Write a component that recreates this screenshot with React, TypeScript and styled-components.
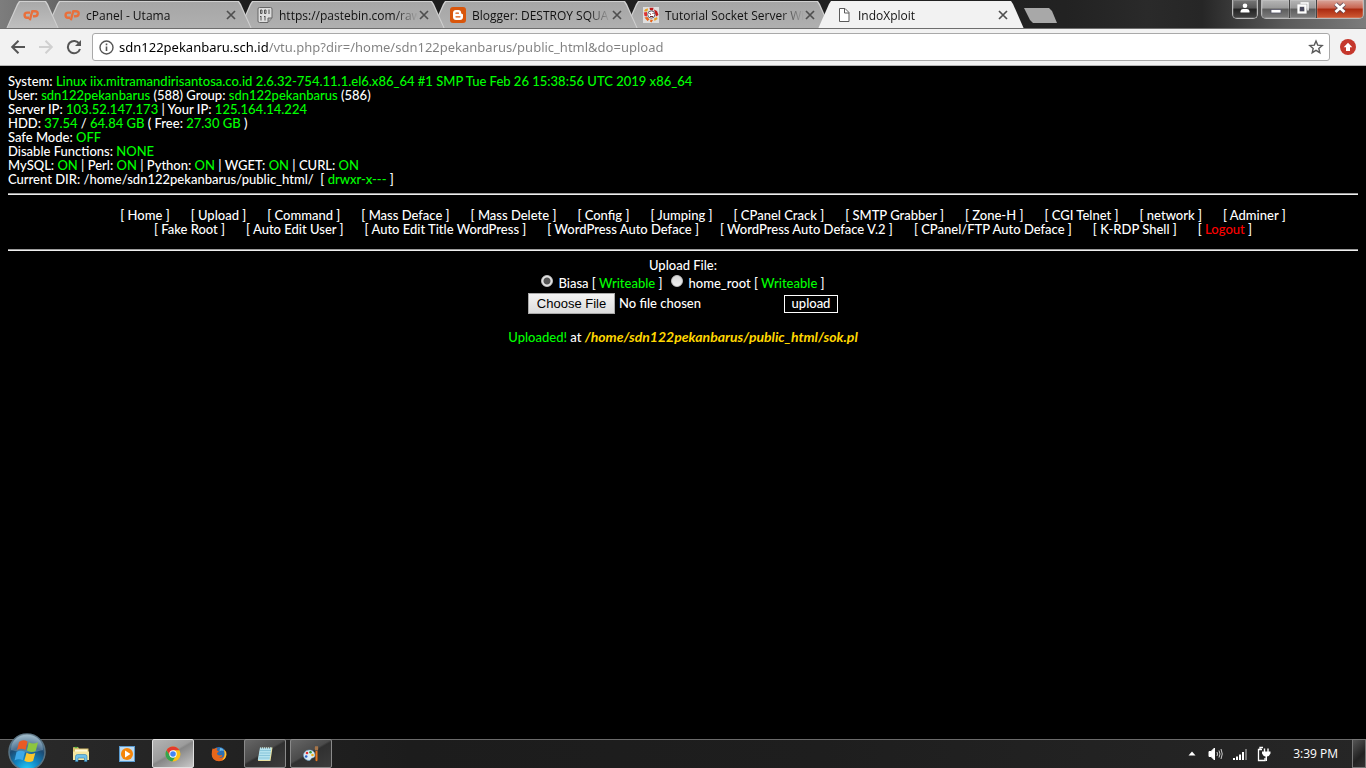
import React from "react";
import styled, { createGlobalStyle, css } from "styled-components";

const shellFont = `Lato, "Noto Sans", "Liberation Sans", sans-serif`;
const chromeFont = `"Open Sans", "Noto Sans", "Liberation Sans", sans-serif`;

const Global = createGlobalStyle`
  *, *::before, *::after { box-sizing: border-box; }
  body { margin: 0; background: #000; }
  button, input { font: inherit; }
`;

const Screen = styled.div`
  min-height: 100vh;
  display: flex;
  flex-direction: column;
  background: #000;
`;

/* ---------- Browser frame ---------- */

const TitleBar = styled.header`
  display: flex;
  height: 29px;
  padding-left: 6px;
  overflow: hidden;
  background: linear-gradient(90deg, #7d7d7d 0, #6a6a6a 50px, #3c3c3c 140px, #1c1c1c 250px, #222 78%, #2a2a2a 84%, #262626 88%, #5a5a5a 94%, #7c7c7c 100%);
  border-bottom: 1px solid #6e6e6e;
  font: 12px/17px ${chromeFont};
`;

const TabStrip = styled.nav`
  display: flex;
  flex: 1;
  min-width: 0;
  align-items: flex-start;
`;

const TabBox = styled.div<{ $active?: boolean; $pinned?: boolean; $order: number }>`
  position: relative;
  isolation: isolate;
  z-index: ${(p) => (p.$active ? 20 : p.$order)};
  display: flex;
  align-items: center;
  flex: 0 1 ${(p) => (p.$pinned ? "53px" : "206px")};
  min-width: 0;
  height: 29px;
  padding: 1px 16px 0 ${(p) => (p.$pinned ? "17px" : "18px")};
  margin-right: -13px;

  &::before,
  &::after {
    content: "";
    position: absolute;
    inset: 1px 0 0 0;
    z-index: -2;
    background: ${(p) => (p.$active ? "#f2f2f2" : "#d0d0d0")};
    clip-path: polygon(0 100%, 11px 3px, 13px 0, calc(100% - 13px) 0, calc(100% - 11px) 3px, 100% 100%);
  }
  &::after {
    inset: 2px 1px 0 1px;
    z-index: -1;
    background: ${(p) =>
      p.$active ? "#f2f2f2" : p.$pinned ? "linear-gradient(#a9a9a9, #c0c0c0)" : "linear-gradient(#a6a6a6, #b0b0b0)"};
  }
`;

const TabLink = styled.a`
  flex: 1;
  min-width: 0;
  margin: 0 1px 0 6px;
  overflow: hidden;
  white-space: nowrap;
  color: #111;
  text-decoration: none;
  mask-image: linear-gradient(90deg, #000 calc(100% - 24px), transparent);
`;

const PinnedLink = styled.a`
  display: flex;
`;

const PlainButton = styled.button`
  display: flex;
  align-items: center;
  justify-content: center;
  flex: none;
  padding: 0;
  border: 0;
  background: none;
`;

const NewTab = styled.button`
  flex: none;
  width: 33px;
  height: 15px;
  margin: 8px 0 0 13px;
  padding: 0;
  border: 0;
  background: #a8a8a8;
  clip-path: polygon(0 0, 25px 0, 28px 3px, 100% 100%, 9px 100%, 6px 12px);
`;

const WindowControls = styled.div`
  display: flex;
  gap: 3px;
  height: 19px;
  padding-right: 2px;
`;

const ControlGroup = styled.div`
  display: flex;
  border: 1px solid #b9b9b9;
  border-top: 0;
  border-radius: 0 0 5px 5px;
  overflow: hidden;
`;

const ControlButton = styled(PlainButton)<{ $kind?: "user" | "close" }>`
  width: ${(p) => (p.$kind === "close" ? "47px" : p.$kind === "user" ? "24px" : "27px")};
  padding-bottom: 2px;
  background: linear-gradient(#b5b5b5 0, #999 45%, #5c5c5c 50%, #7e7e7e 100%);
  box-shadow: inset 0 0 0 1px rgba(255, 255, 255, 0.15);
  ${(p) => p.$kind === "user" && css`background: linear-gradient(#777 0, #555 45%, #222 50%, #444 100%);`}
  ${(p) => p.$kind === "close" && css`background: linear-gradient(#d9a69b 0, #c8634f 45%, #aa2a10 50%, #cf5a35 100%);`}
  & + & {
    border-left: 1px solid #444;
  }
`;

const Toolbar = styled.div`
  display: flex;
  align-items: center;
  height: 37px;
  padding: 0 9px 0 10px;
  background: #f2f2f2;
  border-bottom: 1px solid #b5b5b5;
`;

const NavButtons = styled.div`
  display: flex;
  gap: 12px;
  padding-right: 10px;
`;

const AddressBar = styled.label`
  display: flex;
  flex: 1;
  align-items: center;
  gap: 5px;
  height: 28px;
  padding: 0 5px 0 6px;
  margin-right: 9px;
  border: 1px solid #a9a9a9;
  border-radius: 3px;
  background: #fff;
`;

const AddressInput = styled.input`
  flex: 1;
  min-width: 0;
  padding: 0;
  border: 0;
  outline: 0;
  font: 13px/20px "Noto Sans", "Open Sans", sans-serif;
  color: transparent;
  background: linear-gradient(90deg, #000 149px, #808080 149px);
  background-clip: text;
  -webkit-background-clip: text;
`;

/* ---------- Shell page ---------- */

const Page = styled.main`
  flex: 1;
  padding: 8px;
  color: #fff;
  font: 500 13px/14px ${shellFont};
`;

const Green = styled.span`
  color: #00ff00;
`;

const Rule = styled.hr`
  height: 2px;
  margin: 7px 0 0;
  border: 0;
  border-top: 1px solid #9a9a9a;
  background: #eee;
`;

const Menu = styled.nav`
  padding: 13px 0 6px 40px;
`;

const MenuRow = styled.ul`
  display: flex;
  flex-wrap: wrap;
  justify-content: center;
  column-gap: 21px;
  margin: 0;
  padding: 0;
  list-style: none;
`;

const MenuLink = styled.a<{ $danger?: boolean }>`
  color: ${(p) => (p.$danger ? "#ff0000" : "#fff")};
  text-decoration: none;
`;

const UploadForm = styled.form`
  display: flex;
  flex-direction: column;
  align-items: center;
  padding-top: 7px;
`;

const FormRow = styled.div`
  display: flex;
  align-items: center;
  height: 21px;
`;

const RadioLabel = styled.label`
  display: flex;
  align-items: center;
  gap: 5px;
  margin-right: 9px;
  white-space: pre;
  &:last-child {
    margin-right: 0;
  }
`;

const Radio = styled.input`
  appearance: none;
  width: 12px;
  height: 12px;
  margin: 0 0 4px;
  border: 1px solid #c4c4c4;
  border-radius: 50%;
  background: linear-gradient(#d8d8d8, #efefef);
  &:checked {
    background: radial-gradient(circle, #555 0 3px, #e6e6e6 4px);
  }
`;

const FileInput = styled.input`
  width: 256px;
  height: 21px;
  color: #fff;
  &::file-selector-button {
    width: 87px;
    height: 21px;
    margin: 0 4px 0 0;
    padding: 0;
    border: 1px solid #a9a9a9;
    border-radius: 0;
    background: linear-gradient(#f4f4f4, #dcdcdc);
    color: #000;
    font: 400 13px/19px "Liberation Sans", Arial, sans-serif;
  }
`;

const SubmitButton = styled.button`
  width: 54px;
  height: 18px;
  padding: 0 0 2px;
  border: 1px solid #fff;
  background: #000;
  color: #fff;
  line-height: 14px;
`;

const Result = styled.p`
  margin: 16px 0 0;
  text-align: center;
`;

const FilePath = styled.i`
  color: #ffd700;
  font-size: 14px;
  font-weight: 700;
`;

/* ---------- Taskbar ---------- */

const Taskbar = styled.footer`
  display: flex;
  align-items: stretch;
  height: 29px;
  background: linear-gradient(90deg, #2a2a2a 0, #1c1c1c 30%, #1e1e1e 60%, #262626 100%);
  box-shadow: inset 0 1px #6a6a6a;
`;

const StartButton = styled(PlainButton)`
  position: relative;
  width: 38px;
  height: 35px;
  margin: -6px 14px 0 8px;
  align-items: flex-start;
  overflow: hidden;
`;

const TaskButton = styled(PlainButton)<{ $state?: "open" | "active" }>`
  width: 42px;
  margin-right: 4px;
  border-radius: 2px;
  ${(p) =>
    p.$state === "open" &&
    css`
      border: 1px solid #8a8a8a;
      background: linear-gradient(150deg, #666 0, #4b4b4b 45%, #303030 50%, #3c3c3c 100%);
    `}
  ${(p) =>
    p.$state === "active" &&
    css`
      border: 1px solid #e0e0e0;
      background: linear-gradient(150deg, #b4b4b4 0, #9c9c9c 45%, #868686 50%, #c8c8c8 100%);
    `}
`;

const Tray = styled.div`
  display: flex;
  align-items: center;
  gap: 8px;
  margin-left: auto;
`;

const TrayToggle = styled(PlainButton)`
  margin-right: 4px;
`;

const Clock = styled.time`
  padding: 0 6px 0 13px;
  color: #fff;
  font: 12px/16px ${chromeFont};
`;

const ShowDesktop = styled(PlainButton)`
  align-self: stretch;
  width: 14px;
  border: 1px solid #777;
  background: linear-gradient(135deg, #555, #222 60%, #333);
`;

/* ---------- Icons ---------- */

const CPanelIcon = () => (
  <svg width="16" height="16" viewBox="0 0 16 16" fill="none" stroke="#e8703c" strokeWidth="2.4" strokeLinejoin="round">
    <path d="M7 5.6H4.2C2.6 5.6 1.6 6.6 1.6 8S2.5 10.7 4 10.7H6" />
    <path d="M6.8 13.2L9.2 4.2H12C13.8 4.2 14.9 5.2 14.6 7S13 9.3 11.6 9.3H10" />
  </svg>
);

const PastebinIcon = () => (
  <svg width="16" height="16" viewBox="0 0 16 16" fill="none" stroke="#444">
    <path d="M2.500.5h11a1.500 1.500 0 0 1 1.500 1.500v9l-4 4.500H2.500A1.500 1.500 0 0 1 1 14V2A1.500 1.500 0 0 1 2.500.5z" fill="#ddd" stroke="#666" />
    <path d="M11 15v-4h4" fill="#aaa" stroke="#666" />
    <path d="M3.500 3h1.500v3.500H3.500zM7.500 3h1.500v3.500H7.500zM12 2.500V7M4 9v4.500M8 9v4.500M3 9.500h1M7 9.500h1" strokeWidth=".9" />
  </svg>
);

const BloggerIcon = () => (
  <svg width="16" height="16" viewBox="0 0 16 16">
    <rect width="16" height="16" rx="3" fill="#d9560b" />
    <path d="M6 3h2.500c1.600 0 2.600 1 2.600 2.500 0 1 .4 1.300 1.200 1.400.5.1.7.4.7.9V10c0 1.800-1.200 3-3 3H6c-1.800 0-3-1.200-3-3V6c0-1.800 1.200-3 3-3z" fill="#fff" />
    <path d="M6 6.200h2.400M6 9.800h4" stroke="#d9560b" strokeWidth="1.300" strokeLinecap="round" />
  </svg>
);

const TutorialIcon = () => (
  <svg width="16" height="16" viewBox="0 0 16 16">
    <rect width="16" height="16" fill="#dedede" />
    <path d="M1 4Q2 1 5 1.500L4.500 4Q3 5 1 4z" fill="#e8a020" />
    <path d="M6.500.8h4L10 3.500 7 3zM11 2.500l3 1.500 1.500 4-2.500 1.500L12 6z" fill="#c01a1a" />
    <path d="M.8 5.500L4 5v4.500L1.500 9z" fill="#d33" />
    <path d="M1.500 10.500l3-.5 2 2.500-2 1.500zM7.500 12.500l2.500.5-1.500 2.500-1.500-1z" fill="#e8641a" />
    <path d="M11 11.500l3-1.500.5 2-3 2z" fill="#e8a020" />
    <circle cx="8.300" cy="7.500" r="3.600" fill="#fff" stroke="#445" strokeWidth=".8" />
    <path d="M6.500 6.500l1.500 1M10.500 6l-1 1M7 9.500h3" stroke="#722" />
  </svg>
);

const PageIcon = () => (
  <svg width="16" height="16" viewBox="0 0 16 16" fill="#fff" stroke="#5a5a5a">
    <path d="M3.500 1.500h5.500l4 4v9H3.500z" />
    <path d="M8.500 1.500V6H13" fill="none" />
  </svg>
);

const CloseIcon = () => (
  <svg width="10" height="10" viewBox="0 0 10 10" stroke="#4f4f4f" strokeWidth="1.700">
    <path d="M1 1l8 8M9 1l-8 8" />
  </svg>
);

const UserIcon = () => (
  <svg width="10" height="10" viewBox="0 0 10 10" fill="#fff">
    <circle cx="5" cy="2.700" r="2.300" />
    <path d="M.5 9.500V8Q1 6.200 3 6h4q2 .2 2.500 2v1.500z" />
  </svg>
);

const MinimizeIcon = () => (
  <svg width="12" height="12" viewBox="0 0 12 12">
    <rect x="1" y="7.500" width="10" height="3.500" fill="#fff" stroke="#556" strokeWidth=".8" />
  </svg>
);

const RestoreIcon = () => (
  <svg width="12" height="12" viewBox="0 0 12 12" fill="none">
    <path d="M3.500 1h7.500v7.500" stroke="#fff" strokeWidth="1.400" />
    <rect x="1.500" y="3.500" width="7" height="7" stroke="#fff" strokeWidth="2.200" />
    <rect x="3" y="5" width="4" height="4" fill="#4a4a5e" />
  </svg>
);

const WindowCloseIcon = () => (
  <svg width="14" height="12" viewBox="0 0 14 12">
    <path d="M2.500 2l9 8M11.500 2l-9 8" stroke="#4a4a5e" strokeWidth="4.600" opacity=".7" />
    <path d="M2.500 2l9 8M11.500 2l-9 8" stroke="#fff" strokeWidth="2.800" />
  </svg>
);

const BackIcon = ({ color }: { color: string }) => (
  <svg width="16" height="16" viewBox="0 0 16 16" fill="none" stroke={color} strokeWidth="2">
    <path d="M15 8H2.500M8.500 1.700L2.200 8l6.300 6.300" />
  </svg>
);

const ForwardIcon = ({ color }: { color: string }) => (
  <svg width="16" height="16" viewBox="0 0 16 16" fill="none" stroke={color} strokeWidth="2">
    <path d="M1 8h12.500M7.500 1.700L13.800 8l-6.300 6.300" />
  </svg>
);

const ReloadIcon = () => (
  <svg width="16" height="16" viewBox="0 0 16 16">
    <path d="M13.300 4.700A6.200 6.200 0 1 0 14 10" fill="none" stroke="#555" strokeWidth="2" />
    <path d="M15 1v6H9z" fill="#555" />
  </svg>
);

const InfoIcon = () => (
  <svg width="15" height="15" viewBox="0 0 15 15" fill="none" stroke="#555">
    <circle cx="7.500" cy="7.500" r="6.500" strokeWidth="1.400" />
    <path d="M7.500 6.500v4.500M7.500 3.600v1.600" strokeWidth="1.600" />
  </svg>
);

const StarIcon = () => (
  <svg width="16" height="16" viewBox="0 0 16 16" fill="none" stroke="#5a5a5a" strokeWidth="1.400">
    <path d="M8 2l1.700 4.100 4.500.4-3.400 2.900 1 4.300L8 11.400l-3.800 2.300 1-4.300L1.800 6.500l4.500-.4z" />
  </svg>
);

const UpdateIcon = () => (
  <svg width="18" height="18" viewBox="0 0 18 18">
    <circle cx="9" cy="9" r="8" fill="#c5372c" />
    <path d="M9 4.800l4.300 4.400H11V13H7V9.200H4.700z" fill="#fff" />
  </svg>
);

const StartIcon = () => (
  <svg width="38" height="38" viewBox="0 0 38 38">
    <defs>
      <radialGradient id="orb" cx=".5" cy="1" r=".95">
        <stop offset="0" stopColor="#25d0fa" />
        <stop offset=".35" stopColor="#1287c4" />
        <stop offset=".7" stopColor="#1c4a72" />
        <stop offset="1" stopColor="#7fa3b8" />
      </radialGradient>
    </defs>
    <circle cx="19" cy="19" r="18" fill="url(#orb)" stroke="#5a7484" strokeWidth="1.500" />
    <path d="M3 17A16 16 0 0 1 35 17Q19 22 3 17z" fill="#fff" opacity=".22" />
    <path d="M11 9q4-3 8.500-.5l-2 8.500q-4-2.500-8.500 0z" fill="#ea5a24" />
    <path d="M20.800 9.300q4.500 2.500 9.200 0l-2.300 8.700q-4.500 2-8.800-.5z" fill="#8dc63f" />
    <path d="M8.500 19q4-2.500 8.500 0l-2.200 8.300q-4-2.300-8.300.2z" fill="#3ea8e8" />
    <path d="M18.500 19.800q4.500 2.200 8.800.3l-2.200 8q-4.500 2-8.800-.3z" fill="#fcc62d" />
  </svg>
);

const ExplorerIcon = () => (
  <svg width="18" height="16" viewBox="0 0 18 16">
    <path d="M1 2Q1 1 2 1h4l1 1.500h9.500V14H1z" fill="#d9bf68" />
    <path d="M2.500 1.500h3" stroke="#4fb848" strokeWidth="1.200" />
    <path d="M3 3.500h12.500V6H3z" fill="#fff8d8" />
    <path d="M1 5.500h16v8.500H1z" fill="#f6e6a0" />
    <path d="M3.500 15.500V10.500Q3.500 8.500 5.500 8.500h7.500Q15 8.500 15 10.500v5h-2.500V12h-6.500v3.500z" fill="#6fc0ea" stroke="#2f7fb0" strokeWidth=".6" />
  </svg>
);

const MediaIcon = () => (
  <svg width="16" height="16" viewBox="0 0 16 16">
    <rect x=".5" y=".5" width="15" height="15" fill="#bfdcf2" stroke="#5a9bd0" />
    <circle cx="8" cy="8" r="6" fill="#f5860a" />
    <path d="M6 4.500L11.500 8 6 11.500z" fill="#fff" />
  </svg>
);

const ChromeIcon = () => (
  <svg width="16" height="16" viewBox="0 0 16 16">
    <circle cx="8" cy="8" r="7.500" fill="#fbc116" />
    <path d="M8 8L1.500 4.200A7.500 7.500 0 0 1 14.500 4.300H8z" fill="#e23a2e" />
    <path d="M1.500 4.200L5 10 8 8V4.300z" fill="#e23a2e" />
    <path d="M1.500 4.200A7.500 7.500 0 0 0 7.300 15.500L10.500 10.500 5 9.800z" fill="#34a350" />
    <circle cx="8" cy="8" r="3.700" fill="#fff" />
    <circle cx="8" cy="8" r="2.800" fill="#4285f4" />
  </svg>
);

const FirefoxIcon = () => (
  <svg width="16" height="16" viewBox="0 0 16 16">
    <circle cx="8" cy="8" r="7" fill="#2a6fb5" />
    <path d="M9 2q3 0 4 3-3-1-4.500.5z" fill="#6ab8e8" />
    <path d="M1.500 2.500Q2.500 3 3.500 2.800 5 1.800 6.500 2 5.500 3 5.800 4.500L7.800 5Q7.500 6.500 6 7q0 2.500 3 2.500 1.500-.8 2.500 0-1 2.500-4 2 4 1.500 6-2 1-3-.5-6Q15.500 5 15.500 8.500 15 15 8 15.300 1 15 .7 8.500.7 5 1.500 2.500z" fill="#e8661a" />
    <path d="M13 3.500q2.500 2 2.300 5.500Q14.500 13 11 14.500q3-3.500 2.700-6.500z" fill="#fbc62d" />
  </svg>
);

const NotepadIcon = () => (
  <svg width="16" height="16" viewBox="0 0 16 16">
    <path d="M3.500 1.500h12l-2 13.500H1z" fill="#e8e0a0" />
    <path d="M3 1.500h11.500L12.500 14H.8z" fill="#b4e2ee" />
    <path d="M3 4.500h11M2.600 7h11M2.200 9.500h11M1.800 12h11" stroke="#7fbfd4" strokeWidth=".8" />
    <path d="M4.500.5v2M6.500.5v2M8.500.5v2M10.500.5v2M12.500.5v2" stroke="#555" strokeWidth=".8" />
  </svg>
);

const PaintIcon = () => (
  <svg width="16" height="16" viewBox="0 0 16 16">
    <path d="M6 4C2.500 4 .5 7 .5 9.500S3 14.500 6 14.500c2 0 1.500-1.500 2.500-2.200S12 12 12 9 9.500 4 6 4z" fill="#dcecf6" stroke="#6b9dc0" strokeWidth=".6" />
    <circle cx="4" cy="7" r="1.300" fill="#d33" />
    <circle cx="7.500" cy="6.300" r="1.300" fill="#3a9a3a" />
    <circle cx="3.200" cy="10.500" r="1.300" fill="#2a62c8" />
    <circle cx="9.500" cy="9" r="1.300" fill="#f0b020" />
    <path d="M12.500 5h2v9.500q-1 1.500-2 0z" fill="#e8741a" />
    <path d="M12 4.500Q11.500 2 12 .3h3q.5 2 0 4.200z" fill="#a5754a" />
  </svg>
);

const TrayArrowIcon = () => (
  <svg width="8" height="5" viewBox="0 0 8 5" fill="#fff">
    <path d="M.5 4.500L4 .5l3.500 4z" />
  </svg>
);

const VolumeIcon = () => (
  <svg width="16" height="14" viewBox="0 0 16 14" fill="none" stroke="#ccc">
    <path d="M1 4.500h2L6.500 1v12L3 9.500H1z" fill="#fff" stroke="#fff" />
    <path d="M9 5q1 2 0 4M11 3.500q2 3.500 0 7M13 2q2.500 5 0 10" />
  </svg>
);

const NetworkIcon = () => (
  <svg width="16" height="14" viewBox="0 0 16 14" fill="#fff">
    <path d="M1 11h2v2H1zM4 9.500h2V13H4zM7 7.500h2V13H7zM10 5h2v8h-2z" />
    <path d="M13 2h2v11h-2z" fill="#777" />
  </svg>
);

const PowerIcon = () => (
  <svg width="16" height="16" viewBox="0 0 16 16">
    <path d="M6 3.500H2.500v11H9V12M4 3V1.500h3" fill="none" stroke="#fff" strokeWidth="1.300" />
    <path d="M8.500 2.500V6M12 2.500V6" stroke="#fff" strokeWidth="1.400" />
    <path d="M6 5.500h8.500v2Q13.500 10 11 10.500V15H9.500v-4.500Q7 10 6 7.500z" fill="#fff" />
  </svg>
);

/* ---------- Composition ---------- */

const tabs = [
  { title: "cPanel - Utama", icon: <CPanelIcon /> },
  { title: "https://pastebin.com/raw", icon: <PastebinIcon /> },
  { title: "Blogger: DESTROY SQUA", icon: <BloggerIcon /> },
  { title: "Tutorial Socket Server Wi", icon: <TutorialIcon /> },
  { title: "IndoXploit", icon: <PageIcon />, active: true },
];

const menuRows = [
  ["Home", "Upload", "Command", "Mass Deface", "Mass Delete", "Config", "Jumping", "CPanel Crack", "SMTP Grabber", "Zone-H", "CGI Telnet", "network", "Adminer"],
  ["Fake Root", "Auto Edit User", "Auto Edit Title WordPress", "WordPress Auto Deface", "WordPress Auto Deface V.2", "CPanel/FTP Auto Deface", "K-RDP Shell", "Logout"],
];

export default function App() {
  return (
    <Screen>
      <Global />
      <TitleBar>
        <TabStrip aria-label="Tabs">
          <TabBox $pinned $order={10}>
            <PinnedLink href="#cpanel" aria-label="cPanel"><CPanelIcon /></PinnedLink>
          </TabBox>
          {tabs.map((tab, i) => (
            <TabBox key={tab.title} $active={tab.active} $order={9 - i}>
              {tab.icon}
              <TabLink href="#tab">{tab.title}</TabLink>
              <PlainButton type="button" aria-label="Close tab"><CloseIcon /></PlainButton>
            </TabBox>
          ))}
          <NewTab type="button" aria-label="New tab" />
        </TabStrip>
        <WindowControls>
          <ControlGroup>
            <ControlButton $kind="user" type="button" aria-label="Profile"><UserIcon /></ControlButton>
          </ControlGroup>
          <ControlGroup>
            <ControlButton type="button" aria-label="Minimize"><MinimizeIcon /></ControlButton>
            <ControlButton type="button" aria-label="Restore"><RestoreIcon /></ControlButton>
            <ControlButton $kind="close" type="button" aria-label="Close"><WindowCloseIcon /></ControlButton>
          </ControlGroup>
        </WindowControls>
      </TitleBar>

      <Toolbar>
        <NavButtons>
          <PlainButton type="button" aria-label="Back"><BackIcon color="#555" /></PlainButton>
          <PlainButton type="button" aria-label="Forward"><ForwardIcon color="#d0d0d0" /></PlainButton>
          <PlainButton type="button" aria-label="Reload"><ReloadIcon /></PlainButton>
        </NavButtons>
        <AddressBar>
          <InfoIcon />
          <AddressInput
            type="text"
            aria-label="Address"
            defaultValue="sdn122pekanbaru.sch.id/vtu.php?dir=/home/sdn122pekanbarus/public_html&do=upload"
          />
          <PlainButton type="button" aria-label="Bookmark"><StarIcon /></PlainButton>
        </AddressBar>
        <PlainButton type="button" aria-label="Update"><UpdateIcon /></PlainButton>
      </Toolbar>

      <Page>
        <div>System: <Green>Linux iix.mitramandirisantosa.co.id 2.6.32-754.11.1.el6.x86_64 #1 SMP Tue Feb 26 15:38:56 UTC 2019 x86_64</Green></div>
        <div>User: <Green>sdn122pekanbarus</Green> (588) Group: <Green>sdn122pekanbarus</Green> (586)</div>
        <div>Server IP: <Green>103.52.147.173</Green> | Your IP: <Green>125.164.14.224</Green></div>
        <div>HDD: <Green>37.54</Green> / <Green>64.84 GB</Green> ( Free: <Green>27.30 GB</Green> )</div>
        <div>Safe Mode: <Green>OFF</Green></div>
        <div>Disable Functions: <Green>NONE</Green></div>
        <div>MySQL: <Green>ON</Green> | Perl: <Green>ON</Green> | Python: <Green>ON</Green> | WGET: <Green>ON</Green> | CURL: <Green>ON</Green></div>
        <div>
          Current DIR: <MenuLink href="#root">/</MenuLink><MenuLink href="#home">home</MenuLink>/<MenuLink href="#user">sdn122pekanbarus</MenuLink>/<MenuLink href="#html">public_html</MenuLink>/ &nbsp;[ <Green>drwxr-x---</Green> ]
        </div>
        <Rule />
        <Menu>
          {menuRows.map((row) => (
            <MenuRow key={row[0]}>
              {row.map((label) => (
                <li key={label}>[ <MenuLink href="#menu" $danger={label === "Logout"}>{label}</MenuLink> ]</li>
              ))}
            </MenuRow>
          ))}
        </Menu>
        <Rule />
        <UploadForm onSubmit={(e) => e.preventDefault()}>
          <div>Upload File:</div>
          <FormRow>
            <RadioLabel>
              <Radio type="radio" name="target" defaultChecked />
              <span>Biasa [ <Green>Writeable</Green> ]</span>
            </RadioLabel>
            <RadioLabel>
              <Radio type="radio" name="target" />
              <span>home_root [ <Green>Writeable</Green> ]</span>
            </RadioLabel>
          </FormRow>
          <FormRow>
            <FileInput type="file" aria-label="File to upload" />
            <SubmitButton type="submit">upload</SubmitButton>
          </FormRow>
        </UploadForm>
        <Result>
          <Green>Uploaded!</Green> at <FilePath>/home/sdn122pekanbarus/public_html/sok.pl</FilePath>
        </Result>
      </Page>

      <Taskbar>
        <StartButton type="button" aria-label="Start"><StartIcon /></StartButton>
        <TaskButton type="button" aria-label="Explorer"><ExplorerIcon /></TaskButton>
        <TaskButton type="button" aria-label="Media Player"><MediaIcon /></TaskButton>
        <TaskButton $state="active" type="button" aria-label="Chrome"><ChromeIcon /></TaskButton>
        <TaskButton type="button" aria-label="Firefox"><FirefoxIcon /></TaskButton>
        <TaskButton $state="open" type="button" aria-label="Notepad"><NotepadIcon /></TaskButton>
        <TaskButton $state="open" type="button" aria-label="Paint"><PaintIcon /></TaskButton>
        <Tray>
          <TrayToggle type="button" aria-label="Show hidden icons"><TrayArrowIcon /></TrayToggle>
          <VolumeIcon />
          <NetworkIcon />
          <PowerIcon />
          <Clock>3:39 PM</Clock>
          <ShowDesktop type="button" aria-label="Show desktop" />
        </Tray>
      </Taskbar>
    </Screen>
  );
}
